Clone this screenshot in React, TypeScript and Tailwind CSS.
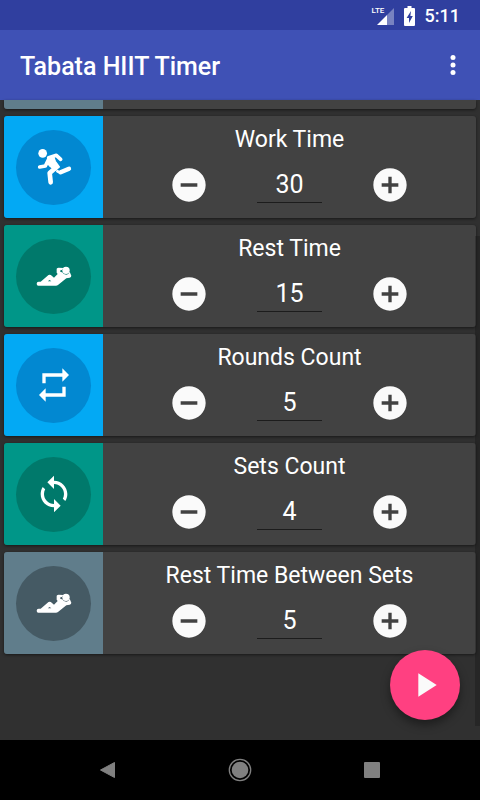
import { useState, type ReactNode } from "react"

type Tone = "blue" | "teal" | "slate"

type Setting = {
  id: string
  label: string
  value: number
  tone: Tone
  icon: ReactNode
}

const TILE: Record<Tone, string> = {
  blue: "bg-[#03a9f4]",
  teal: "bg-[#009688]",
  slate: "bg-[#607d8b]",
}

const DISC: Record<Tone, string> = {
  blue: "bg-[#0288d1]",
  teal: "bg-[#00796b]",
  slate: "bg-[#455a64]",
}

function RunIcon() {
  return (
    <svg viewBox="0 0 120 120" className="size-10" fill="none" stroke="#fff" strokeLinecap="round" strokeLinejoin="round" aria-hidden="true">
      <circle cx="26" cy="19" r="13" fill="#fff" stroke="none" />
      <path d="M44 32 L67 25 L80 37" strokeWidth="11" />
      <path d="M45 35 L34 57 L17 60" strokeWidth="11" />
      <path d="M44 32 L58 27 L64 43 L76 60 L64 70 L48 58 L40 48 Z" fill="#fff" strokeWidth="4" />
      <path d="M65 62 L47 78 L50 106" strokeWidth="14" />
      <path d="M80 76 L105 65" strokeWidth="13" />
      <path d="M70 73 L79 77" strokeWidth="8" />
    </svg>
  )
}

function RestIcon() {
  return (
    <svg viewBox="0 0 120 120" className="size-10" fill="#fff" aria-hidden="true">
      <path
        fillRule="evenodd"
        d="M8 83 Q8 77 14 77 L20 77 L40 60 Q47 53 54 60 L60 65 L71 54 L68 50 L68 38 Q70 35 74 35 L88 36 L84 42 L79 43 L79 48 L85 49 Q88 56 97 56 Q104 55 107 47 L112 59 Q112 64 107 65 L97 67 L72 87 Q69 89 66 89 L13 89 Q8 89 8 83 Z M41 76 L52 76 L47 72 Z"
      />
      <circle cx="96" cy="43" r="11" />
    </svg>
  )
}

function RepeatIcon() {
  return (
    <svg viewBox="0 0 24 24" className="size-10" fill="#fff" aria-hidden="true">
      <path d="M7 7h10v3l4-4-4-4v3H5v6h2V7zm10 10H7v-3l-4 4 4 4v-3h12v-6h-2v4z" />
    </svg>
  )
}

function SyncIcon() {
  return (
    <svg viewBox="0 0 24 24" className="size-10" fill="#fff" aria-hidden="true">
      <path d="M12 4V1L8 5l4 4V6c3.31 0 6 2.69 6 6 0 1.01-.25 1.97-.7 2.8l1.46 1.46C19.54 15.03 20 13.57 20 12c0-4.42-3.58-8-8-8zm0 14c-3.31 0-6-2.69-6-6 0-1.01.25-1.97.7-2.8L5.24 7.74C4.46 8.97 4 10.43 4 12c0 4.42 3.58 8 8 8v3l4-4-4-4v3z" />
    </svg>
  )
}

const SETTINGS: Setting[] = [
  { id: "work", label: "Work Time", value: 30, tone: "blue", icon: <RunIcon /> },
  { id: "rest", label: "Rest Time", value: 15, tone: "teal", icon: <RestIcon /> },
  { id: "rounds", label: "Rounds Count", value: 5, tone: "blue", icon: <RepeatIcon /> },
  { id: "sets", label: "Sets Count", value: 4, tone: "teal", icon: <SyncIcon /> },
  { id: "rest-sets", label: "Rest Time Between Sets", value: 5, tone: "slate", icon: <RestIcon /> },
]

function StatusBar() {
  return (
    <div className="flex h-[30px] shrink-0 items-center justify-end bg-[#303f9f] pr-5 pt-0.5 text-white">
      <div className="relative mr-[10px] h-[19px] w-[22px]">
        <span className="absolute left-0 top-0 text-[8px] font-medium leading-[8px]">LTE</span>
        <svg viewBox="0 0 17 17" className="absolute bottom-px right-0 size-[17px]" aria-hidden="true">
          <path d="M17 0 V17 H10 V7 Z" fill="#fff" fillOpacity="0.35" />
          <path d="M10 7 V17 H0 Z" fill="#fff" />
        </svg>
      </div>
      <svg viewBox="0 0 11 20" className="mr-[10px] h-5 w-[11px]" aria-hidden="true">
        <path d="M3.5 0 H7.5 V2 H10 Q11 2 11 3 V19 Q11 20 10 20 H1 Q0 20 0 19 V3 Q0 2 1 2 H3.5 Z" fill="#fff" />
        <path d="M7 5 L2.6 12 H5 V17 L8.8 10 H6.4 Z" fill="#303f9f" />
      </svg>
      <span className="text-[18px] font-medium leading-[20px]">5:11</span>
    </div>
  )
}

function SettingCard({ setting }: { setting: Setting }) {
  const [value, setValue] = useState(setting.value)

  return (
    <section className="flex h-[102px] shrink-0 overflow-hidden rounded-[3px] bg-[#424242] shadow-[0_1px_3px_rgba(0,0,0,0.5)]">
      <div className={`flex w-[99px] shrink-0 items-center justify-center ${TILE[setting.tone]}`}>
        <div className={`flex size-[75px] items-center justify-center rounded-full ${DISC[setting.tone]}`}>{setting.icon}</div>
      </div>
      <div className="flex flex-1 flex-col items-center pt-[9px]">
        <label htmlFor={setting.id} className="text-[23px] leading-[30px]">{setting.label}</label>
        <div className="mt-[10px] flex items-center gap-12">
          <button type="button" aria-label={`Decrease ${setting.label}`} onClick={() => setValue(v => Math.max(0, v - 1))}>
            <svg viewBox="0 0 24 24" className="size-10" fill="#fafafa" aria-hidden="true">
              <path d="M12 2C6.48 2 2 6.48 2 12s4.48 10 10 10 10-4.48 10-10S17.52 2 12 2zm5 11H7v-2h10v2z" />
            </svg>
          </button>
          <input
            id={setting.id}
            type="text"
            inputMode="numeric"
            value={value}
            onChange={e => setValue(Number(e.target.value) || 0)}
            className="h-9 w-[65px] border-b border-[#1c1c1c] bg-transparent pb-px text-center text-[25px] leading-[30px] outline-none"
          />
          <button type="button" aria-label={`Increase ${setting.label}`} onClick={() => setValue(v => v + 1)}>
            <svg viewBox="0 0 24 24" className="size-10" fill="#fafafa" aria-hidden="true">
              <path d="M12 2C6.48 2 2 6.48 2 12s4.48 10 10 10 10-4.48 10-10S17.52 2 12 2zm5 11h-4v4h-2v-4H7v-2h4V7h2v4h4v2z" />
            </svg>
          </button>
        </div>
      </div>
    </section>
  )
}

function NavBar() {
  return (
    <nav className="flex h-[60px] shrink-0 items-center justify-center gap-[108px] bg-black">
      <button type="button" aria-label="Back">
        <svg viewBox="0 0 24 24" className="size-6" aria-hidden="true">
          <path d="M18.5 4.5 V19.5 L4.5 12 Z" fill="#808080" stroke="#808080" strokeLinejoin="round" />
        </svg>
      </button>
      <button type="button" aria-label="Home">
        <svg viewBox="0 0 24 24" className="size-6" aria-hidden="true">
          <circle cx="12" cy="12" r="10.7" fill="none" stroke="#808080" strokeWidth="1.3" />
          <circle cx="12" cy="12" r="8.3" fill="#808080" />
        </svg>
      </button>
      <button type="button" aria-label="Overview">
        <svg viewBox="0 0 24 24" className="size-6" aria-hidden="true">
          <rect x="4" y="4" width="16" height="16" rx="1" fill="#808080" />
        </svg>
      </button>
    </nav>
  )
}

export default function App() {
  return (
    <div className="flex min-h-screen flex-col bg-[#303030] font-[Roboto,sans-serif] text-white">
      <StatusBar />
      <header className="flex h-[70px] shrink-0 items-center justify-between bg-[#3f51b5] pl-5 pr-3">
        <h1 className="pt-1 text-[25px] font-medium leading-[30px]">Tabata HIIT Timer</h1>
        <button type="button" aria-label="More options">
          <svg viewBox="0 0 24 24" className="size-[30px]" fill="#fff" aria-hidden="true">
            <circle cx="12" cy="6" r="2" />
            <circle cx="12" cy="12" r="2" />
            <circle cx="12" cy="18" r="2" />
          </svg>
        </button>
      </header>

      <main className="relative flex flex-1 flex-col gap-[7px] px-1 pb-[85px]">
        {/* tail of the card scrolled under the header */}
        <div className="flex h-[9px] shrink-0 overflow-hidden rounded-b-[3px] bg-[#424242] shadow-[0_1px_3px_rgba(0,0,0,0.5)]">
          <div className="w-[99px] bg-[#607d8b]" />
        </div>
        {SETTINGS.map(s => <SettingCard key={s.id} setting={s} />)}

        <div className="absolute bottom-[14px] right-0 top-[136px] w-[5px] bg-black/20" />
        <button
          type="button"
          aria-label="Start"
          className="absolute bottom-5 right-5 flex size-[70px] items-center justify-center rounded-full bg-[#ff4081] shadow-[0_5px_10px_rgba(0,0,0,0.4)]"
        >
          <svg viewBox="0 0 24 24" className="size-10" fill="#fafafa" aria-hidden="true">
            <path d="M8 5v14l11-7z" />
          </svg>
        </button>
      </main>

      <NavBar />
    </div>
  )
}
